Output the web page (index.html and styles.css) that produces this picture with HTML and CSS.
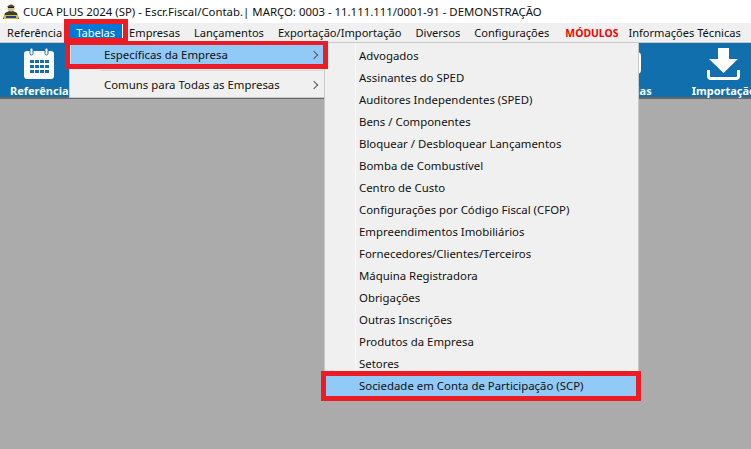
FILE: index.html
```html
<!DOCTYPE html>
<html lang="pt-BR">
<head>
  <meta charset="UTF-8">
  <title>CUCA PLUS 2024</title>
  <link rel="stylesheet" href="styles.css">
</head>
<body>
  <div class="janela">
    <div class="titulo">
      <svg class="logo" width="18" height="17" viewBox="0 0 18 17">
        <path d="M1 16 L3 10 L7 8 H11 L15 10 L17 16 Z" fill="#35402c"/>
        <rect x="2" y="12" width="14" height="4" fill="#d9b92e"/>
        <rect x="4" y="13" width="10" height="2" fill="#27408b"/>
        <circle cx="9" cy="5" r="3.6" fill="#d8bb90"/>
        <path d="M5 4 Q9 -1 13 4 Z" fill="#4f4a38"/>
        <rect x="6" y="4" width="6" height="1" fill="#1c1c1c"/>
      </svg>
      <span>CUCA PLUS 2024 (SP) - Escr.Fiscal/Contab.| MARÇO: 0003 - 11.111.111/0001-91 - DEMONSTRAÇÃO</span>
    </div>
    <nav class="menu">
      <span class="menu-item">Referência</span>
      <span class="menu-item ativo">Tabelas</span>
      <span class="menu-item">Empresas</span>
      <span class="menu-item">Lançamentos</span>
      <span class="menu-item">Exportação/Importação</span>
      <span class="menu-item">Diversos</span>
      <span class="menu-item">Configurações</span>
      <span class="menu-item modulos">MÓDULOS</span>
      <span class="menu-item info">Informações Técnicas</span>
    </nav>
    <div class="barra">
      <div class="botao botao-ref">
        <svg width="30" height="31" viewBox="0 0 30 31">
          <rect x="0" y="3" width="30" height="28" rx="3" fill="#fff"/>
          <rect x="6" y="0" width="3" height="7" rx="1.5" fill="#fff" stroke="#126fae"/>
          <rect x="21" y="0" width="3" height="7" rx="1.5" fill="#fff" stroke="#126fae"/>
          <g fill="#126fae">
            <rect x="6" y="12" width="4" height="3"/><rect x="11" y="12" width="4" height="3"/><rect x="16" y="12" width="4" height="3"/><rect x="21" y="12" width="4" height="3"/>
            <rect x="6" y="17" width="4" height="3"/><rect x="11" y="17" width="4" height="3"/><rect x="16" y="17" width="4" height="3"/><rect x="21" y="17" width="4" height="3"/>
            <rect x="6" y="22" width="4" height="3"/><rect x="11" y="22" width="4" height="3"/><rect x="16" y="22" width="4" height="3"/><rect x="21" y="22" width="4" height="3"/>
          </g>
        </svg>
        <span>Referência</span>
      </div>
      <div class="direita">
        <div class="botao botao-dias">
          <span class="borda-icone"></span>
          <span>ias</span>
        </div>
        <div class="botao botao-imp">
          <svg width="33" height="32" viewBox="0 0 33 32">
            <path d="M11 0 H22 V11 H31 L16.5 25 L2 11 H11 Z" fill="#fff"/>
            <path d="M1.5 22 V28 Q1.5 30.5 4 30.5 H29 Q31.5 30.5 31.5 28 V22" fill="none" stroke="#fff" stroke-width="3"/>
          </svg>
          <span>Importação</span>
        </div>
      </div>
    </div>
    <div class="fundo"></div>

    <div class="submenu submenu-tabelas">
      <div class="linha sel"><span>Específicas da Empresa</span><i class="seta"></i></div>
      <div class="separador"></div>
      <div class="linha"><span>Comuns para Todas as Empresas</span><i class="seta"></i></div>
    </div>

    <div class="submenu submenu-especificas">
      <div class="linha">Advogados</div>
      <div class="linha">Assinantes do SPED</div>
      <div class="linha">Auditores Independentes (SPED)</div>
      <div class="linha">Bens / Componentes</div>
      <div class="linha">Bloquear / Desbloquear Lançamentos</div>
      <div class="linha">Bomba de Combustível</div>
      <div class="linha">Centro de Custo</div>
      <div class="linha">Configurações por Código Fiscal (CFOP)</div>
      <div class="linha">Empreendimentos Imobiliários</div>
      <div class="linha">Fornecedores/Clientes/Terceiros</div>
      <div class="linha">Máquina Registradora</div>
      <div class="linha">Obrigações</div>
      <div class="linha">Outras Inscrições</div>
      <div class="linha">Produtos da Empresa</div>
      <div class="linha">Setores</div>
      <div class="linha sel">Sociedade em Conta de Participação (SCP)</div>
    </div>

    <div class="marca marca-tabelas"></div>
    <div class="marca marca-especificas"></div>
    <div class="marca marca-scp"></div>
  </div>
</body>
</html>
```

FILE: styles.css
```css
html, body {
  margin: 0;
  padding: 0;
}
body {
  font-family: "Noto Sans", "Open Sans", sans-serif;
  font-size: 11.4px;
  color: #111;
  background: #ababab;
}
.janela {
  position: relative;
  width: 751px;
  height: 449px;
  overflow: hidden;
  display: flex;
  flex-direction: column;
}
.titulo {
  height: 23px;
  background: #fff;
  display: flex;
  align-items: center;
  gap: 3px;
  padding-left: 2px;
  white-space: nowrap;
}
.menu {
  height: 19px;
  background: #f0f0f0;
  border-bottom: 1px solid #c8c8c8;
  display: flex;
  align-items: baseline;
  white-space: nowrap;
  font-size: 11.1px;
}
.menu-item {
  padding: 0 7px;
  line-height: 19px;
}
.ativo {
  background: #0078d7;
  color: #fff;
  border-right: 1px solid #fff;
  margin-right: -1px;
}
.modulos {
  color: #f00;
  font-weight: bold;
  font-size: 10.4px;
  padding-right: 4px;
  margin-left: 2px;
}
.info {
  padding-left: 4px;
  padding-right: 0;
  margin-left: 2px;
}
.barra {
  height: 54px;
  background: #126fae;
  border-bottom: 2px solid #666;
  display: flex;
  justify-content: space-between;
  color: #fff;
  font-weight: bold;
  font-size: 11px;
  line-height: 12px;
}
.direita {
  display: flex;
  gap: 40px;
}
.botao {
  display: flex;
  flex-direction: column;
  align-items: center;
  justify-content: space-between;
  padding: 5px 0 0;
  white-space: nowrap;
}
.botao-ref {
  padding-left: 10px;
}
.botao-imp {
  margin-right: -5px;
}
.botao-dias {
  align-items: flex-end;
}
.borda-icone {
  width: 12px;
  height: 22px;
  margin: 4px 11px 0 0;
  box-sizing: border-box;
  border: 3px solid #fff;
  border-radius: 4px;
}
.fundo {
  flex: 1;
  background: #ababab;
}
.submenu {
  position: absolute;
  background: #f0f0f0;
  border: 1px solid #c8c8c8;
  box-sizing: border-box;
  white-space: nowrap;
}
.submenu-tabelas {
  left: 69px;
  top: 42px;
  width: 256px;
  height: 56px;
  padding: 2px 1px;
}
.submenu-especificas {
  left: 324px;
  top: 42px;
  width: 315px;
  height: 357px;
  padding: 2px 1px;
  background: linear-gradient(to right, #f0f0f0 30px, #f8f8f8 30px, #f8f8f8 31px, #f0f0f0 31px);
}
.linha {
  height: 22px;
  line-height: 22px;
  padding-left: 33px;
  display: flex;
  justify-content: space-between;
  align-items: center;
}
.sel {
  background: #91c9f7;
}
.submenu-tabelas .linha {
  height: 20px;
}
.separador {
  height: 1px;
  background: #d7d7d7;
  margin: 5px 0 4px 30px;
}
.seta {
  width: 5px;
  height: 5px;
  border-top: 1px solid #555;
  border-right: 1px solid #555;
  transform: rotate(45deg);
  margin-right: 6px;
}
.marca {
  position: absolute;
  border: 5px solid #ed1c24;
  box-sizing: border-box;
}
.marca-tabelas {
  left: 64px;
  top: 19px;
  width: 64px;
  height: 24px;
}
.marca-especificas {
  left: 65px;
  top: 41px;
  width: 263px;
  height: 28px;
  border-top-width: 4px;
}
.marca-scp {
  left: 321px;
  top: 371px;
  width: 320px;
  height: 30px;
}
```
